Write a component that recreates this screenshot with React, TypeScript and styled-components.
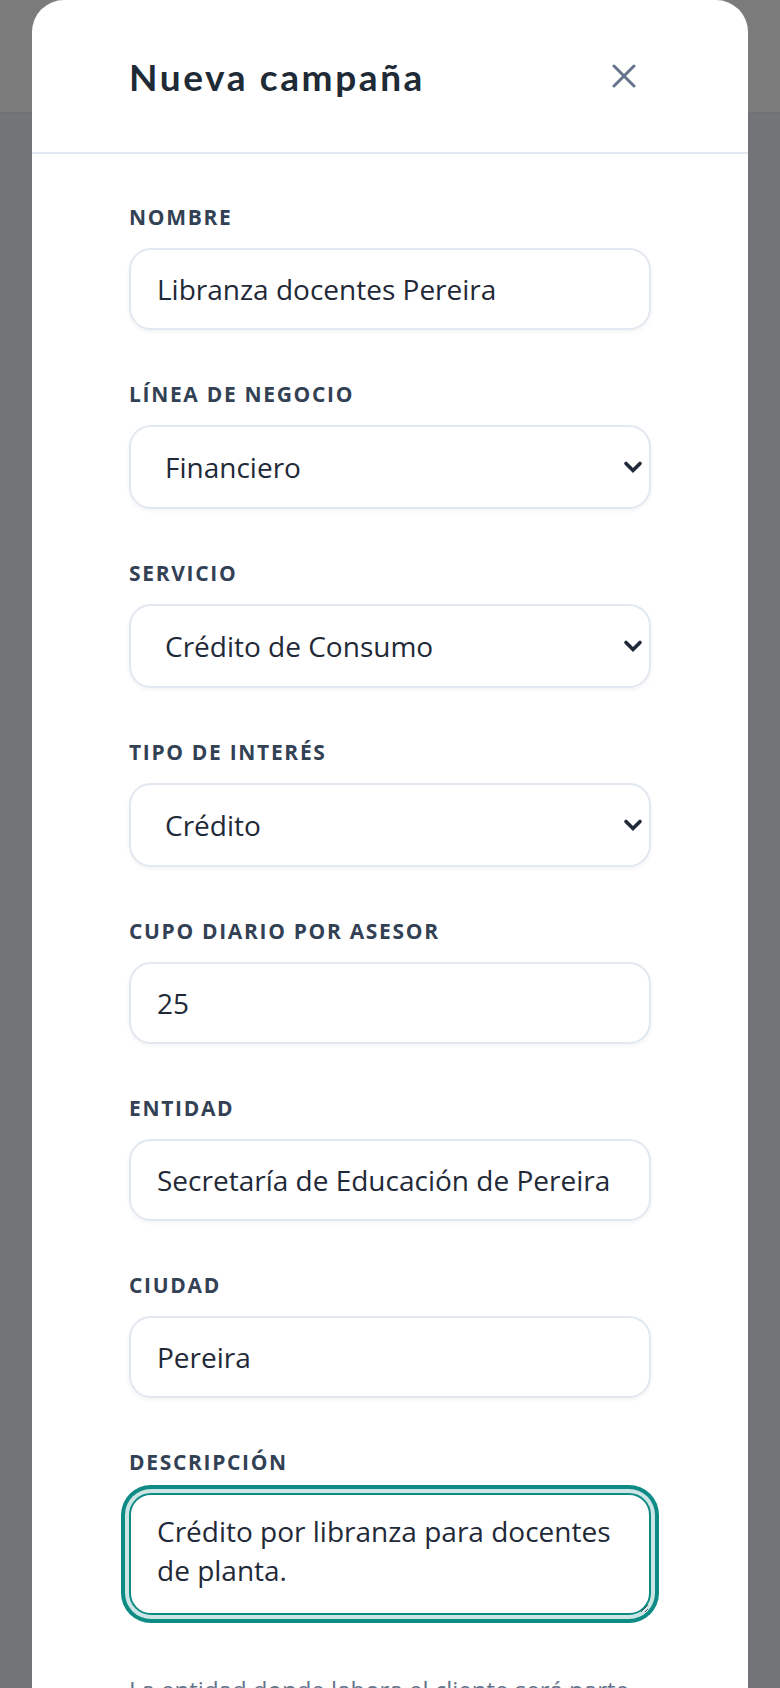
import styled, { createGlobalStyle } from 'styled-components'

const GlobalStyle = createGlobalStyle`
  * {
    box-sizing: border-box;
  }
  html, body {
    margin: 0;
    padding: 0;
    height: 100%;
  }
  body {
    background: #737477;
    font-family: "Open Sans", "Liberation Sans", sans-serif;
    overflow: hidden;
  }
`

const Page = styled.div`
  position: relative;
  min-height: 1688px;
  background: #737477;
`

const PageBar = styled.div`
  height: 113px;
  background: #7b7b7c;
  border-bottom: 1px solid #6f7073;
`

const Modal = styled.div`
  position: absolute;
  top: 0;
  left: 32px;
  width: 716px;
  min-height: 1720px;
  background: #ffffff;
  border-radius: 32px 32px 0 0;
`

const Header = styled.div`
  height: 154px;
  padding: 0 112px 0 97px;
  display: flex;
  align-items: center;
  justify-content: space-between;
  border-bottom: 2px solid #e2e8f0;
`

const Title = styled.h2`
  margin: 0;
  font-family: Lato, "Open Sans", sans-serif;
  font-weight: 700;
  font-size: 37px;
  letter-spacing: 2.6px;
  color: #1e2a35;
`

const CloseButton = styled.button`
  width: 24px;
  height: 24px;
  padding: 0;
  border: none;
  background: transparent;
  color: #64748b;
  display: flex;
  align-items: center;
  justify-content: center;
  cursor: pointer;
`

const Body = styled.div`
  padding: 47px 97px 0;
  display: flex;
  flex-direction: column;
  gap: 48px;
`

const Field = styled.div`
  display: flex;
  flex-direction: column;
`

const Label = styled.label`
  font-size: 21px;
  line-height: 32px;
  font-weight: 700;
  letter-spacing: 0.08em;
  text-transform: uppercase;
  color: #334155;
  margin-bottom: 15px;
`

const fieldBase = `
  width: 100%;
  font-family: "Open Sans", "Liberation Sans", sans-serif;
  font-size: 28px;
  line-height: 39px;
  color: #1f2937;
  background: #ffffff;
  border: 2px solid #e2e8f0;
  border-radius: 22px;
  box-shadow: 0 2px 4px rgba(15, 23, 42, 0.05);
  outline: none;
`

const TextInput = styled.input`
  ${fieldBase}
  height: 82px;
  padding: 0 26px;
`

const SelectWrap = styled.div`
  position: relative;
`

const Select = styled.select`
  ${fieldBase}
  height: 84px;
  padding: 0 50px 0 34px;
  appearance: none;
  -webkit-appearance: none;
`

const Chevron = styled.svg`
  position: absolute;
  right: 8px;
  top: 50%;
  transform: translateY(-50%);
  pointer-events: none;
  color: #1f2937;
`

const TextArea = styled.textarea<{ $active?: boolean }>`
  ${fieldBase}
  height: 122px;
  padding: 17px 26px;
  resize: vertical;
  border-color: ${(p) => (p.$active ? '#0f8b86' : '#e2e8f0')};
  box-shadow: ${(p) =>
    p.$active ? '0 0 0 4px #cbe6e4, 0 0 0 8px #0f8b86' : '0 2px 4px rgba(15, 23, 42, 0.05)'};
`

const Hint = styled.p`
  margin: 57px 0 0;
  font-size: 24px;
  line-height: 36px;
  color: #64748b;
`

const SelectField = ({ label, value, options }: { label: string; value: string; options: string[] }) => (
  <Field>
    <Label>{label}</Label>
    <SelectWrap>
      <Select defaultValue={value}>
        {options.map((o) => (
          <option key={o}>{o}</option>
        ))}
      </Select>
      <Chevron width="20" height="14" viewBox="0 0 20 14" fill="none">
        <path d="M3 3.5 10 10.5 17 3.5" stroke="currentColor" strokeWidth="3.6" strokeLinecap="round" strokeLinejoin="miter" />
      </Chevron>
    </SelectWrap>
  </Field>
)

const InputField = ({ label, value }: { label: string; value: string }) => (
  <Field>
    <Label>{label}</Label>
    <TextInput defaultValue={value} />
  </Field>
)

export default function App() {
  return (
    <>
      <GlobalStyle />
      <Page>
        <PageBar />
        <Modal>
          <Header>
            <Title>Nueva campaña</Title>
            <CloseButton aria-label="Cerrar">
              <svg width="24" height="24" viewBox="0 0 24 24" fill="none">
                <path d="M2 2 22 22M22 2 2 22" stroke="currentColor" strokeWidth="3" strokeLinecap="round" />
              </svg>
            </CloseButton>
          </Header>
          <Body>
            <InputField label="Nombre" value="Libranza docentes Pereira" />
            <SelectField label="Línea de negocio" value="Financiero" options={['Financiero', 'Seguros', 'Comercial']} />
            <SelectField
              label="Servicio"
              value="Crédito de Consumo"
              options={['Crédito de Consumo', 'Crédito Hipotecario', 'Libre Inversión']}
            />
            <SelectField label="Tipo de interés" value="Crédito" options={['Crédito', 'Ahorro', 'Inversión']} />
            <InputField label="Cupo diario por asesor" value="25" />
            <InputField label="Entidad" value="Secretaría de Educación de Pereira" />
            <InputField label="Ciudad" value="Pereira" />
            <Field>
              <Label>Descripción</Label>
              <TextArea $active defaultValue="Crédito por libranza para docentes de planta." />
              <Hint>La entidad donde labora el cliente será parte del mensaje de la campaña.</Hint>
            </Field>
          </Body>
        </Modal>
      </Page>
    </>
  )
}
